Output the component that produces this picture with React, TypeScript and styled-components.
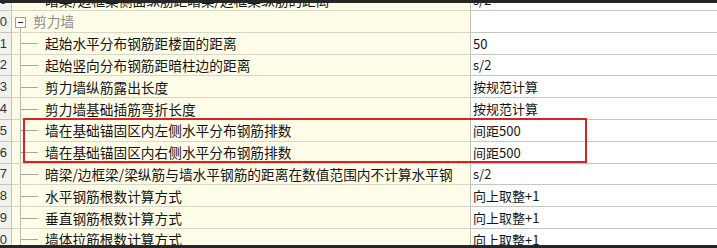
import React from "react";
import styled, { createGlobalStyle } from "styled-components";

const GlobalStyle = createGlobalStyle`
  html, body {
    margin: 0;
    padding: 0;
    background: #262626;
    overflow: hidden;
  }
  body {
    font-family: "Noto Sans CJK SC", "Liberation Sans", sans-serif;
  }
`;

const Frame = styled.div`
  width: 717px;
  height: 242px;
  margin-top: 3px;
  background: #ffffff;
  overflow: hidden;
  position: relative;
`;

// the grid is scrolled, so the first row is only half visible
const Rows = styled.div`
  margin-top: -13.8px;
`;

const Row = styled.div`
  display: grid;
  grid-template-columns: 12px 459px 1fr;
  height: 21.8px;
`;

const Cell = styled.div`
  box-sizing: border-box;
  display: flex;
  align-items: center;
  border-right: 1px solid #c2c2bc;
  border-bottom: 1px solid #c6c6c0;
  overflow: hidden;
  white-space: nowrap;
  font-size: 13.7px;
  color: #141414;
`;

// row number column is scrolled too: only the last digit peeks out
const NumCell = styled(Cell)`
  background: #f1f1ee;
  justify-content: flex-end;
  padding-right: 4px;
  font-family: "Liberation Sans", sans-serif;
  font-size: 13px;
  color: #333;
`;

const NameCell = styled(Cell)`
  background: #fffde8;
  border-bottom-color: #d8d6c4;
`;

const ValueCell = styled(Cell)`
  border-right: none;
  padding-left: 2px;
  font-size: 13px;
`;

const Gutter = styled.div<{ $group?: boolean; $hidden?: boolean }>`
  position: relative;
  flex: none;
  width: ${(p) => (p.$group ? 21 : 33)}px;
  height: 100%;
  visibility: ${(p) => (p.$hidden ? "hidden" : "visible")};

  &::before {
    content: "";
    position: absolute;
    left: 8px;
    top: ${(p) => (p.$group ? "60%" : "0")};
    bottom: 0;
    width: 1px;
    background: #b8b8b0;
  }

  &::after {
    content: "";
    display: ${(p) => (p.$group ? "none" : "block")};
    position: absolute;
    left: 9px;
    top: 50%;
    width: 17px;
    height: 1px;
    background: #a8a8a0;
  }
`;

const Toggle = styled.span`
  position: absolute;
  left: 3px;
  top: 6px;
  box-sizing: border-box;
  width: 11px;
  height: 11px;
  border: 1px solid #a0a0a0;
  background: #fbfbfb;
  z-index: 1;

  &::after {
    content: "";
    position: absolute;
    left: 2px;
    right: 2px;
    top: 4px;
    height: 1px;
    background: #222;
  }
`;

const GroupLabel = styled.span`
  color: #8c8c8c;
`;

const Mark = styled.div`
  position: absolute;
  left: 23px;
  top: 115px;
  width: 564px;
  height: 45px;
  box-sizing: border-box;
  border: 2px solid #d42424;
  pointer-events: none;
`;

type Item = { n: string; name: string; value: string; group?: boolean; top?: boolean };

const items: Item[] = [
  { n: "19", name: "暗梁/边框梁侧面纵筋距暗梁/边框梁纵筋的距离", value: "s/2", top: true },
  { n: "20", name: "剪力墙", value: "", group: true },
  { n: "21", name: "起始水平分布钢筋距楼面的距离", value: "50" },
  { n: "22", name: "起始竖向分布钢筋距暗柱边的距离", value: "s/2" },
  { n: "23", name: "剪力墙纵筋露出长度", value: "按规范计算" },
  { n: "24", name: "剪力墙基础插筋弯折长度", value: "按规范计算" },
  { n: "25", name: "墙在基础锚固区内左侧水平分布钢筋排数", value: "间距500" },
  { n: "26", name: "墙在基础锚固区内右侧水平分布钢筋排数", value: "间距500" },
  { n: "27", name: "暗梁/边框梁/梁纵筋与墙水平钢筋的距离在数值范围内不计算水平钢", value: "s/2" },
  { n: "28", name: "水平钢筋根数计算方式", value: "向上取整+1" },
  { n: "29", name: "垂直钢筋根数计算方式", value: "向上取整+1" },
  { n: "30", name: "墙体拉筋根数计算方式", value: "向上取整+1" },
];

const App: React.FC = () => {
  return (
    <>
      <GlobalStyle />
      <Frame>
        <Rows>
          {items.map((it) => (
            <Row key={it.n}>
              <NumCell>{it.n}</NumCell>
              <NameCell>
                {it.group ? (
                  <>
                    <Gutter $group>
                      <Toggle />
                    </Gutter>
                    <GroupLabel>{it.name}</GroupLabel>
                  </>
                ) : (
                  <>
                    <Gutter $hidden={it.top} />
                    {it.name}
                  </>
                )}
              </NameCell>
              <ValueCell>{it.value}</ValueCell>
            </Row>
          ))}
        </Rows>
        <Mark />
      </Frame>
    </>
  );
};

export default App;
